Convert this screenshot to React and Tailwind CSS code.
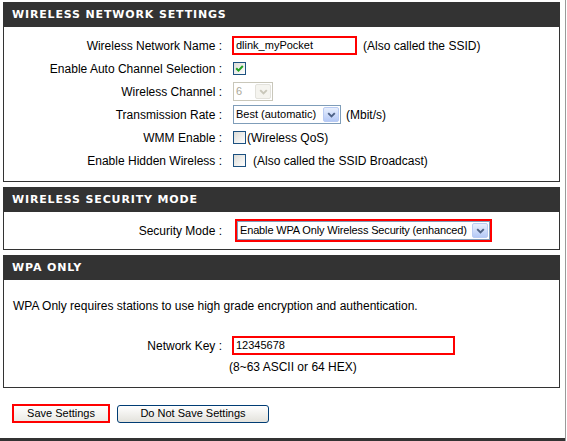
import React from 'react';

const Panel = ({ title, children, className = '' }) => (
    <div className={`ml-[3px] w-[557px] border border-[#333333] ${className}`}>
        <div className="flex h-[24px] items-center bg-[#333333] pl-[8px] font-['DejaVu_Sans',Verdana,sans-serif] text-[11px] font-bold tracking-[0.85px] text-white">
            {title}
        </div>
        {children}
    </div>
);

const Row = ({ label, children }) => (
    <div className="flex h-[23px] items-center">
        <div className="w-[218px] whitespace-nowrap text-right">{label} :</div>
        <div className="flex items-center pl-[10px]">{children}</div>
    </div>
);

const Chevron = ({ disabled }) => (
    <span
        className={`flex h-full w-[16px] shrink-0 items-center justify-center rounded-[2px] border ${
            disabled ? 'border-[#e3e2dc] bg-[#f5f4ef]' : 'border-[#b9cbf3] bg-gradient-to-b from-[#e8effd] to-[#b5c9f6]'
        }`}
    >
        <svg width="9" height="6" viewBox="0 0 9 6">
            <path d="M1.2 1.2 L4.5 4.5 L7.8 1.2" stroke={disabled ? '#c9c7ba' : '#4d6185'} strokeWidth="1.9" fill="none" />
        </svg>
    </span>
);

const Select = ({ value, width, disabled, tight }) => (
    <div
        className={`flex h-[19px] items-center justify-between border bg-white p-[1px] text-[11px] ${
            disabled ? 'border-[#c9c7ba] text-[#aca899]' : 'border-[#7f9db9] text-black'
        }`}
        style={{ width }}
    >
        <span className={`whitespace-nowrap pl-[1px] ${tight ? 'tracking-[-0.15px]' : ''}`}>{value}</span>
        <Chevron disabled={disabled} />
    </div>
);

const Checkbox = ({ checked }) => (
    <span className="flex h-[13px] w-[13px] items-center justify-center border border-[#1c5180] bg-gradient-to-br from-[#dcdcd7] to-white">
        {checked && (
            <svg width="9" height="9" viewBox="0 0 9 9">
                <path d="M1.2 4.2 L3.5 6.6 L7.8 2" stroke="#21a121" strokeWidth="2" fill="none" />
            </svg>
        )}
    </span>
);

const TextInput = ({ value, width }) => (
    <div className="flex h-[19px] items-center border-2 border-[#ff0000] bg-white pl-[2px] text-[11px]" style={{ width }}>
        {value}
    </div>
);

const App = () => {
    return (
        <div className="flex h-[441px] w-[567px] flex-col overflow-hidden bg-white font-['Liberation_Sans',Arial,sans-serif] text-[12px] text-black">
            <div className="flex w-[566px] flex-1 flex-col border-r border-[#9a9a9a] pt-[2px]">
                {/* Wireless network settings */}
                <Panel title="WIRELESS NETWORK SETTINGS">
                    <div className="pt-[7px] pb-[9px]">
                        <Row label="Wireless Network Name">
                            <TextInput value="dlink_myPocket" width={125} />
                            <span className="ml-[6px]">(Also called the SSID)</span>
                        </Row>
                        <Row label="Enable Auto Channel Selection">
                            <span className="ml-[1px]"><Checkbox checked /></span>
                        </Row>
                        <Row label="Wireless Channel">
                            <span className="ml-[1px]"><Select value="6" width={40} disabled /></span>
                        </Row>
                        <Row label="Transmission Rate">
                            <span className="ml-[1px]"><Select value="Best (automatic)" width={108} /></span>
                            <span className="ml-[5px]">(Mbit/s)</span>
                        </Row>
                        <Row label="WMM Enable">
                            <span className="ml-[1px]"><Checkbox /></span>
                            <span className="ml-[1px]">(Wireless QoS)</span>
                        </Row>
                        <Row label="Enable Hidden Wireless">
                            <span className="ml-[1px]"><Checkbox /></span>
                            <span className="ml-[7px]">(Also called the SSID Broadcast)</span>
                        </Row>
                    </div>
                </Panel>

                {/* Security mode */}
                <Panel title="WIRELESS SECURITY MODE" className="mt-[5px]">
                    <div className="pt-[7px] pb-[7px]">
                        <Row label="Security Mode">
                            <div className="ml-[3px] border-2 border-[#ff0000]">
                                <Select value="Enable WPA Only Wireless Security (enhanced)" width={253} tight />
                            </div>
                        </Row>
                    </div>
                </Panel>

                {/* WPA only */}
                <Panel title="WPA ONLY" className="mt-[5px]">
                    <div className="pt-[18px] pb-[12px]">
                        <p className="pl-[9px] leading-[16px]">
                            WPA Only requires stations to use high grade encryption and authentication.
                        </p>
                        <div className="mt-[20px]">
                            <Row label="Network Key">
                                <TextInput value="12345678" width={223} />
                            </Row>
                        </div>
                        <div className="mt-[2px] pl-[225px] leading-[16px]">(8~63 ASCII or 64 HEX)</div>
                    </div>
                </Panel>

                <div className="mt-[16px] flex items-center gap-[7px] pl-[12px] text-[11px]">
                    <button className="flex h-[19px] w-[98px] items-center justify-center border-2 border-[#ff0000] bg-gradient-to-b from-white to-[#ecebe6]">
                        Save Settings
                    </button>
                    <button className="flex h-[18px] w-[152px] items-center justify-center rounded-[3px] border border-[#003c74] bg-gradient-to-b from-white to-[#e3e2dc]">
                        Do Not Save Settings
                    </button>
                </div>

                <div className="mt-auto h-[3px] bg-[#333333]" />
            </div>
        </div>
    );
};

export default App;
